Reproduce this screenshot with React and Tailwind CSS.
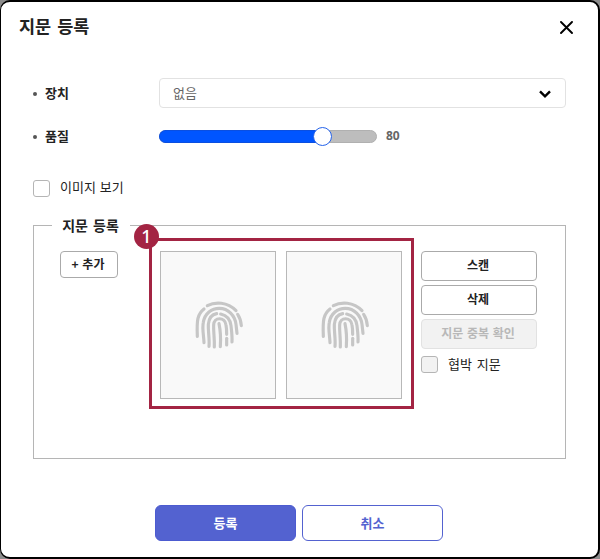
import React from "react";

function Fingerprint() {
  return (
    <svg
      className="ml-[3px] h-20 w-20"
      viewBox="0 0 240 240"
      fill="none"
      stroke="#c6c6c6"
      strokeWidth="9.5"
      strokeLinecap="round"
    >
      <path d="M82 62 C105 50 142 50 168 77" />
      <path d="M72 72 C52 88 50 105 52 154" />
      <path d="M173 88 C180 98 183 110 184 122" />
      <path d="M72 173 C71 150 66 130 70 112 C74 85 95 70 118 70 C145 70 165 92 168 118 L171 145" />
      <path d="M87 184 C89 160 84 140 85 118 C87 98 98 88 110 86" />
      <path d="M122 87 C140 91 151 105 153 122 C155 140 157 155 156 171" />
      <path d="M103 186 C104 160 100 140 101 120 C101 95 135 95 138 120 C140 130 140 140 140 148" />
      <path d="M140 160 V180" />
      <path d="M117 116 C121 135 123 155 121 185" />
    </svg>
  );
}

function ScanBox() {
  return (
    <div className="flex h-[148px] w-[116px] items-center justify-center border border-[#b8b8b8] bg-[#f9f9f9]">
      <Fingerprint />
    </div>
  );
}

function Label({ children }) {
  return (
    <div className="flex w-[126px] items-center">
      <span className="mt-px mr-2 h-1 w-1 rounded-full bg-[#555]" />
      <span className="pb-[2px] text-[13px] font-bold">{children}</span>
    </div>
  );
}

export default function App() {
  return (
    <div className="h-[559px] w-[600px] overflow-hidden bg-[#8c8c8c] font-['Noto_Sans_CJK_KR',sans-serif] leading-none text-[#222]">
      <div className="flex h-full flex-col rounded-[10px] border-2 border-l border-black bg-white">
        <header className="flex h-[50px] items-center justify-between pr-[25px] pl-[18px]">
          <h1 className="pb-[3px] text-[17.5px] font-bold [word-spacing:2px]">지문 등록</h1>
          <svg className="h-[13px] w-[13px]" viewBox="0 0 13 13" stroke="#000" strokeWidth="1.9" strokeLinecap="round">
            <path d="M1 1 L12 12 M12 1 L1 12" />
          </svg>
        </header>

        <main className="mt-[26px] pr-8 pl-8">
          <div className="flex h-[30px] items-center">
            <Label>장치</Label>
            <div className="flex h-[30px] w-[407px] items-center justify-between rounded border border-[#e2e2e2] pr-[14px] pl-[13px]">
              <span className="pb-[2px] text-[13px] text-[#666]">없음</span>
              <svg className="mt-px h-[8px] w-[12px]" viewBox="0 0 12 8" fill="none" stroke="#000" strokeWidth="2.4">
                <path d="M1 1.3 L6 6.3 L11 1.3" />
              </svg>
            </div>
          </div>

          <div className="mt-[13px] flex h-[30px] items-center">
            <Label>품질</Label>
            <div className="flex h-[13px] w-[218px] items-center rounded-full border border-[#b0b0b0] bg-[#bdbdbd]">
              <div className="-ml-px h-[13px] w-[163px] shrink-0 rounded-l-full border border-r-0 border-[#0b4fe0] bg-[#0055ff]" />
              <div className="-ml-[9px] h-[19px] w-[19px] shrink-0 rounded-full border border-[#2563eb] bg-white" />
            </div>
            <span className="ml-[9px] font-['Noto_Sans'] text-[12px] font-bold text-[#666]">80</span>
          </div>

          <div className="mt-[27px] flex h-[20px] items-center">
            <span className="h-[17px] w-[17px] rounded-[3px] border border-[#b5b5b5]" />
            <span className="ml-[10px] pb-[3px] text-[13px] [word-spacing:1px]">이미지 보기</span>
          </div>

          <fieldset className="mt-[18px] h-[243px] w-[533px] border border-[#b5b5b5]">
            <legend className="ml-[18px] flex h-[19px] w-[78px] items-center justify-center pr-[1px] pb-[2px] text-[14px] font-bold [word-spacing:2px]">
              지문 등록
            </legend>
            <div className="flex items-start pt-[3px]">
              <button className="mt-[13px] ml-[26px] h-[27px] w-[58px] rounded-[4px] border border-[#aaa] pr-[2px] pb-[2px] text-[12px] leading-none font-bold [word-spacing:1px]">
                + 추가
              </button>
              <div className="relative ml-[31px] flex h-[171px] w-[265px] gap-[10px] border-[3px] border-[#a32443] pt-[10px] pl-[8px]">
                <span className="absolute -top-[17px] -left-[18px] flex h-[25px] w-[25px] items-center justify-center rounded-full bg-[#a32443] pb-[2px] font-['Noto_Sans'] text-[18px] leading-none font-medium text-white">
                  1
                </span>
                <ScanBox />
                <ScanBox />
              </div>
              <div className="mt-[13px] ml-[7px] flex w-[116px] flex-col text-[12px]">
                <button className="h-[30px] rounded-[4px] border border-[#aaa] pr-[2px] pb-[3px] leading-none font-bold">스캔</button>
                <button className="mt-1 h-[30px] rounded-[4px] border border-[#aaa] pr-[2px] pb-[3px] leading-none font-bold">삭제</button>
                <button className="mt-1 h-[30px] rounded-[4px] border border-[#e2e2e2] bg-[#f2f2f2] pr-[2px] pb-[2px] leading-none font-bold text-[#b8b8b8] [word-spacing:1px]">
                  지문 중복 확인
                </button>
                <div className="mt-[5px] flex h-[20px] items-center">
                  <span className="h-[17px] w-[17px] rounded-[3px] border border-[#b5b5b5] bg-[#f2f2f2]" />
                  <span className="ml-[10px] pb-[2px] text-[13px] [word-spacing:2px]">협박 지문</span>
                </div>
              </div>
            </div>
          </fieldset>
        </main>

        <footer className="mt-[46px] flex justify-center gap-[6px] pr-px text-[13px] font-bold">
          <button className="h-9 w-[141px] rounded-[6px] border border-[#4c5bd0] bg-[#5362d0] pb-[2px] leading-none text-white">등록</button>
          <button className="h-9 w-[141px] rounded-[6px] border border-[#5362d0] pb-[2px] leading-none text-[#5362d0]">취소</button>
        </footer>
      </div>
    </div>
  );
}
